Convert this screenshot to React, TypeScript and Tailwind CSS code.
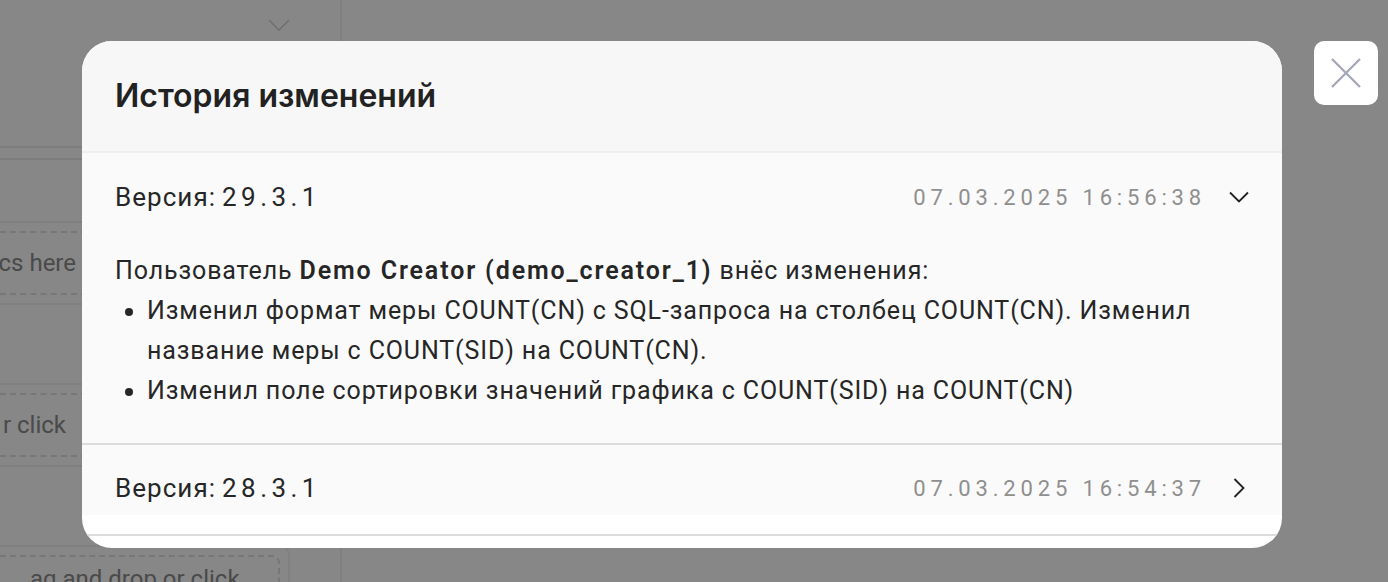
type Version = {
  id: string;
  version: string;
  date: string;
  open: boolean;
};

const VERSIONS: Version[] = [
  { id: 'v29', version: '29.3.1', date: '07.03.2025 16:56:38', open: true },
  { id: 'v28', version: '28.3.1', date: '07.03.2025 16:54:37', open: false },
];

function Sidebar() {
  return (
    <aside className="h-full w-[342px] border-r-2 border-[#f2f2f2] bg-white font-['Roboto',sans-serif] text-[24px] text-[#8c8c8c]">
      <div className="flex h-[146px] items-start justify-end pr-[50px] pt-[19px]">
        <svg width="22" height="13" viewBox="0 0 22 13" fill="none" stroke="#d4d4d4" strokeWidth="1.6">
          <path d="M1 1l10 10L21 1" />
        </svg>
      </div>
      <div className="h-[14px] border-y-2 border-[#ececec]" />
      <div className="h-[61px]" />
      <div className="mr-[50px] border-2 border-l-0 border-[#f2f2f2] py-[8px] pr-[8px]">
        <div className="flex h-[64px] items-center border-2 border-l-0 border-dashed border-[#e0e0e0]">
          <span className="w-[76px] whitespace-nowrap text-right [direction:rtl]">cs here</span>
        </div>
      </div>
      <div className="h-[78px]" />
      <div className="mr-[50px] border-2 border-l-0 border-[#f2f2f2] py-[8px] pr-[8px]">
        <div className="flex h-[64px] items-center border-2 border-l-0 border-dashed border-[#e0e0e0]">
          <span className="w-[66px] whitespace-nowrap text-right [direction:rtl]">r click</span>
        </div>
      </div>
      <div className="h-[78px]" />
      <div className="mr-[50px] rounded-r-[10px] border-2 border-l-0 border-[#f2f2f2] py-[8px] pr-[8px]">
        <div className="flex h-[64px] items-start rounded-r-[8px] border-2 border-l-0 border-dashed border-[#e0e0e0] pt-[4px]">
          <span className="whitespace-nowrap pl-[30px]">ag and drop or click</span>
        </div>
      </div>
    </aside>
  );
}

function Chevron({ open }: { open: boolean }) {
  return (
    <div className="flex w-[20px] items-center justify-center">
      {open ? (
        <svg width="20" height="12" viewBox="0 0 20 12" fill="none" stroke="#222" strokeWidth="1.8">
          <path d="M1 1.5l9 9 9-9" />
        </svg>
      ) : (
        <svg width="12" height="20" viewBox="0 0 12 20" fill="none" stroke="#222" strokeWidth="1.8">
          <path d="M1.5 1l9 9-9 9" />
        </svg>
      )}
    </div>
  );
}

function VersionRow({ item }: { item: Version }) {
  return (
    <div className="flex items-center justify-between">
      <div className="flex items-baseline gap-[6px] text-[26px] text-[#262626]">
        <span className="tracking-[0.04em]">Версия:</span>
        <span className="tracking-[0.17em]">{item.version}</span>
      </div>
      <div className="flex items-center gap-[23px]">
        <span className="text-[22px] tracking-[0.22em] text-[#8f8f8f]">{item.date}</span>
        <Chevron open={item.open} />
      </div>
    </div>
  );
}

function ChangeList() {
  return (
    <div className="pb-[32px] pt-[12px] text-[25px] leading-[40px] tracking-[0.035em] text-[#262626]">
      <p>
        Пользователь <b className="font-semibold tracking-[0.075em]">Demo Creator (demo_creator_1)</b> внёс
        изменения:
      </p>
      <ul className="list-disc pl-[32px]">
        <li>
          Изменил формат меры COUNT(CN) с SQL-запроса на столбец COUNT(CN). Изменил название меры с
          COUNT(SID) на COUNT(CN).
        </li>
        <li>Изменил поле сортировки значений графика с COUNT(SID) на COUNT(CN)</li>
      </ul>
    </div>
  );
}

export default function App() {
  return (
    <div className="relative h-[582px] w-[1388px] overflow-hidden bg-white font-['Roboto',sans-serif]">
      <Sidebar />

      <div className="absolute inset-0 flex items-start gap-[32px] bg-black/[0.47] pl-[82px] pt-[41px]">
        <div className="w-[1200px] shrink-0 overflow-hidden rounded-[30px] bg-white">
          <header className="flex h-[112px] items-center border-b-2 border-[#efefef] bg-[#f7f7f7] px-[33px]">
            <h2 className="font-['Inter',sans-serif] text-[32px] font-semibold text-[#222]">История изменений</h2>
          </header>

          <div className="border-b-2 border-[#dcdcdc] bg-[#fafafa] px-[33px]">
            <div className="flex h-[86px] items-center pt-[2px]">
              <div className="w-full">
                <VersionRow item={VERSIONS[0]} />
              </div>
            </div>
            <ChangeList />
          </div>

          <div className="flex h-[70px] items-center bg-[#fafafa] px-[33px] pt-[16px]">
            <div className="w-full">
              <VersionRow item={VERSIONS[1]} />
            </div>
          </div>
          <div className="h-[19px]" />
          <div className="h-[2px] bg-[#dcdcdc]" />
          <div className="h-[12px]" />
        </div>

        <button type="button" className="flex h-[64px] w-[64px] items-center justify-center rounded-[10px] bg-white">
          <svg width="30" height="30" viewBox="0 0 30 30" fill="none" stroke="#a3a6b8" strokeWidth="2.2">
            <path d="M1 1l28 28M29 1L1 29" />
          </svg>
        </button>
      </div>
    </div>
  );
}
